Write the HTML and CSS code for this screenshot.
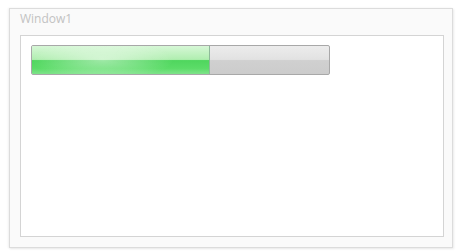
FILE: index.html
```html
<!DOCTYPE html>
<html lang="en">
<head>
    <meta charset="UTF-8">
    <title>Window1</title>
    <link rel="stylesheet" href="styles.css">
</head>
<body>
    <div class="window">
        <div class="title">Window1</div>
        <div class="panel">
            <div class="progress">
                <div class="progress-fill" style="width: 60%"></div>
            </div>
        </div>
    </div>
</body>
</html>
```

FILE: styles.css
```css
body {
    margin: 0;
    padding: 8px 7px 4px 9px;
    background: #ffffff;
    font-family: "Open Sans", "Noto Sans", sans-serif;
}
.window {
    box-sizing: border-box;
    height: 240px;
    border: 1px solid #dcdcdc;
    background: #fafafa;
    box-shadow: -1px 0 2px rgba(0,0,0,0.06), 1px 1px 2px rgba(0,0,0,0.08);
    padding: 0 8px 10px 10px;
    display: flex;
    flex-direction: column;
}
.title {
    font-size: 12px;
    color: #c2c2c2;
    height: 26px;
    line-height: 20px;
}
.panel {
    flex: 1;
    background: #ffffff;
    border: 1px solid #d4d4d4;
    padding: 9px 10px;
}
.progress {
    width: 297px;
    height: 28px;
    border: 1px solid #a8a8a8;
    border-radius: 2px;
    background: linear-gradient(#ececec, #e2e2e2 48%, #d0d0d0 52%, #cccccc);
    position: relative;
    overflow: hidden;
}
.progress-fill {
    height: 100%;
    background:
        radial-gradient(ellipse 40% 70% at 40% 50%, rgba(255,255,255,0.45), rgba(255,255,255,0) 100%),
        linear-gradient(#d6f7d6, #b0eeb0 48%, #4fd65e 52%, #5cdc68 80%, #7ee38a);
    border-right: 1px solid #8fb89a;
    box-sizing: border-box;
}
```
